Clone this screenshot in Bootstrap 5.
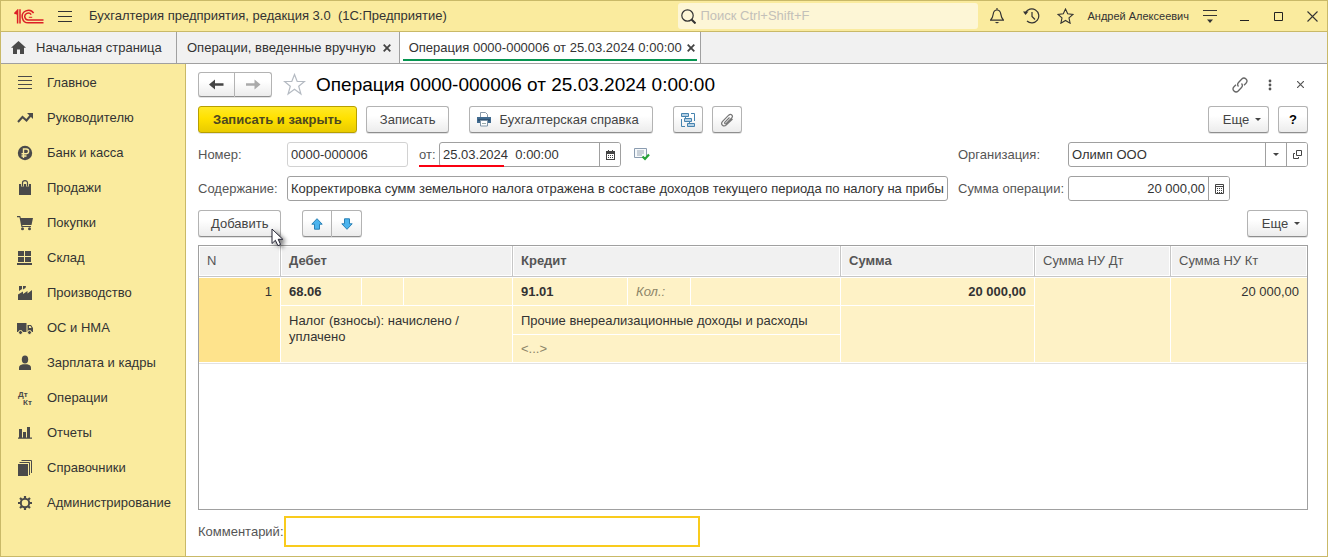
<!DOCTYPE html>
<html lang="ru">
<head>
<meta charset="utf-8">
<meta name="viewport" content="width=device-width, initial-scale=1">
<title>Операция 0000-000006 от 25.03.2024 0:00:00</title>
<link href="https://cdn.jsdelivr.net/npm/bootstrap@5.3.0/dist/css/bootstrap.min.css" rel="stylesheet">
<style>
  :root { --gold: #faeb9e; --gold-line: #c9b968; --ink: #333; --line: #a0a0a0; }
  body { font-family: "Liberation Sans", Arial, sans-serif; font-size: 13px; line-height: 16px; color: var(--ink); }
  svg { display: block; flex: none; }
  a { color: inherit; text-decoration: none; }
  .window { border: 1px solid var(--gold-line); }
  .plain { border: 0; background: none; padding: 0; color: inherit; line-height: 16px; }

  .titlebar { height: 31px; background: var(--gold); border-bottom: 1px solid var(--gold-line); padding: 0 9px 0 13px; }
  .search { width: 300px; height: 26px; background: #fdf6d6; border-radius: 3px; padding-left: 3px; }
  .search input { border: 0; background: none; outline: 0; padding: 0; width: 240px; }
  .search input::placeholder { color: #c3c0b9; opacity: 1; }
  .user { font-size: 11px; }

  .tabs { height: 32px; background: #f1f1f1; border-bottom: 1px solid var(--line); }
  .tab-item { border-right: 1px solid var(--line); padding: 0 8px 0 10px; height: 31px; gap: 7px; }
  .tab-home { width: 176px; gap: 10px; }
  .tab-open { background: #fff; padding: 0 3px; }
  .tab-open > div { border-bottom: 2px solid #079551; padding: 4px 2px 0 6px; height: 29px; gap: 5px; }

  .sections { width: 185px; background: var(--gold); border-right: 1px solid var(--gold-line); padding-top: 1px; }
  .sections a { height: 35px; padding-left: 16px; gap: 14px; }
  .glyph { fill: #4a4a4a; }

  .form-area { padding: 8px 19px 9px 12px; min-width: 0; }
  .form-area h1 { font-size: 19px; line-height: 24px; color: #000; }
  .tool { height: 27px; border: 1px solid #b3b3b3; border-bottom-color: #8e8e8e; border-radius: 3px; background: linear-gradient(#fff 35%, #ececec); color: #444; padding: 0 13px; line-height: 16px; box-shadow: 0 1px 0 #e2e2e2; }
  .tool-main { background: linear-gradient(#ffe927, #ffe100 45%, #e9cb00); border-color: #b79f00; font-weight: bold; color: #4d4820; padding: 0 14px; }
  .tool-square { width: 30px; padding: 0; }
  .tool-more { width: 61px; gap: 6px; padding: 0 0 0 7px; }
  .tool-add { padding: 0 12px; }
  .pair > .tool + .tool { border-left: 0; border-radius: 0 3px 3px 0; }
  .pair > .tool:first-child { border-radius: 3px 0 0 3px; }
  .nav-pair .tool { height: 25px; width: 37px; padding: 0; }
  .caret { width: 0; border: 3px solid transparent; border-top-color: #444; border-bottom: 0; }

  .fields { display: grid; grid-template-columns: 89px minmax(0, 1fr) 110px 240px; row-gap: 9px; align-items: center; margin-top: 9px; }
  .fields label, .comment label { color: #555; }
  .boxed { display: flex; height: 25px; border: 1px solid var(--line); border-radius: 3px; background: #fff; overflow: hidden; }
  .boxed input { border: 0; outline: 0; background: none; min-width: 0; flex: 1; padding: 0 3px; color: var(--ink); }
  .boxed button { width: 21px; border: 0; border-left: 1px solid var(--line); background: #fff; padding: 0; display: flex; align-items: center; justify-content: center; }
  .dim { border-color: #d2d2d2; }
  .w-number { width: 121px; } .w-date { width: 182px; } .w-sum { width: 162px; }
  .date-line { left: 0; top: 23px; width: 85px; height: 2px; background: #fa0010; }
  .cursor { left: 73px; top: 18px; z-index: 2; }

  .grid-box { border: 1px solid var(--line); margin-top: 8px; }
  .entries { width: 100%; table-layout: fixed; border-collapse: separate; border-spacing: 0; }
  .entries th { height: 31px; padding: 0 8px; background: #f1f1f1; color: #555; font-weight: normal; border-right: 1px solid #c6c6c6; border-bottom: 1px solid #c6c6c6; box-shadow: inset 0 0 0 1px #fff; }
  .entries td { background: #fef2c6; padding: 6px 8px 4px; vertical-align: top; border-right: 1px solid #fff; border-bottom: 1px solid #fff; }
  .entries tr > .edge { border-right: 0; }
  .entries .first td { height: 29px; border-top: 1px solid #fff; }
  .entries .second td { height: 29px; padding-top: 7px; }
  .entries .third td { height: 28px; padding-top: 6px; }
  .entries .picked { background: #fee38c; }
  .grid-end { height: 1px; background: #e2e2e2; }
  .hint { color: #8c8568; }
  .comment { margin-top: 6px; }
  .comment label { width: 86px; }
  .comment input { width: 416px; height: 31px; border: 2px solid #f9cb1d; outline: 0; padding: 0 4px; }
</style>
</head>
<body>
<div class="window d-flex flex-column min-vh-100">

  <header class="titlebar d-flex align-items-center">
    <svg width="30" height="15" viewBox="0 0 30 15" fill="none" stroke="#dc1f26" stroke-width="1.5"><path d="M.4 4.7 3.6 1.3V14.5M6 .3V14.5M1.7 5.2 3.6 3.6"/><path d="M19.6 4.2A6.2 6.2 0 1 0 14.8 13.8H29.5M17.2 5.6A3.5 3.5 0 1 0 14.8 11H29.5"/><path d="M14.8 8.3h3.4" stroke-width="1"/></svg>
    <button class="plain" aria-label="Меню" style="margin:0 17px 0 14px"><svg width="14" height="13" stroke="#333"><path d="M0 1.5h14M0 6.5h14M0 11.5h14"/></svg></button>
    <span>Бухгалтерия предприятия, редакция 3.0&nbsp; (1С:Предприятие)</span>
    <label class="search d-flex align-items-center ms-auto gap-1">
      <svg width="15" height="15" fill="none" stroke="#333" stroke-width="1.2"><circle cx="6.5" cy="6.5" r="5.7"/><path d="m10.5 10.5 4 4" stroke-width="2"/></svg>
      <input type="text" placeholder="Поиск Ctrl+Shift+F" aria-label="Поиск">
    </label>
    <button class="plain" aria-label="Уведомления" style="margin-left:12px"><svg width="14" height="16" fill="none" stroke="#333" stroke-width="1.2"><path d="M7 0v2M.5 12.2h13c-2-2-2.3-3-2.7-6C10.500 3.500 9 2 7 2S3.500 3.500 3.200 6.200c-.4 3-.7 4-2.700 6Z"/><path d="M4.700 14h4.600L7 15.500Z" fill="#333" stroke="none"/></svg></button>
    <button class="plain" aria-label="История" style="margin-left:19px"><svg width="17" height="16" fill="none" stroke="#333" stroke-width="1.2"><path d="M2.500 4.800A7 7 0 1 1 4 13"/><path d="M9 4v4.500l3 3"/><path d="M0 3.500h5.500L2.500 7Z" fill="#333" stroke="none"/></svg></button>
    <button class="plain" aria-label="Избранное" style="margin-left:17px"><svg width="17" height="16" fill="none" stroke="#333" stroke-width="1.1"><path d="m8.500 1 2.200 4.800 5.200.6-3.900 3.500 1.100 5.300-4.600-2.700-4.600 2.700L5 9.900 1.100 6.400l5.200-.6Z"/></svg></button>
    <a href="#" class="user" style="margin-left:13px">Андрей Алексеевич</a>
    <button class="plain" aria-label="Настройки" style="margin-left:14px"><svg width="14" height="14" stroke="#333"><path d="M0 1.500h14M0 6.500h14"/><path d="M4 10.500h6L7 14Z" fill="#333" stroke="none"/></svg></button>
    <button class="plain" aria-label="Свернуть" style="margin-left:23px"><svg width="9" height="12" stroke="#222"><path d="M0 10.500h9"/></svg></button>
    <button class="plain" aria-label="Развернуть" style="margin-left:25px"><svg width="9" height="9" fill="none" stroke="#222"><path d="M.5.5h8v8h-8Z"/></svg></button>
    <button class="plain" aria-label="Закрыть" style="margin-left:24px"><svg width="11" height="11" stroke="#333" stroke-width="1.100"><path d="m.5.5 10 10m0-10-10 10"/></svg></button>
  </header>

  <nav class="tabs d-flex">
    <a href="#" class="tab-item tab-home d-flex align-items-center"><svg class="glyph" width="15" height="13"><path d="M7.500 0 0 6.800h2V13h4V8.500h3V13h4V6.800h2Z"/></svg>Начальная страница</a>
    <div class="tab-item d-flex align-items-center"><a href="#">Операции, введенные вручную</a><button class="plain" aria-label="Закрыть вкладку"><svg width="8" height="8" stroke="#444" stroke-width="1.800"><path d="m.7.7 6.600 6.600m0-6.600L.7 7.300"/></svg></button></div>
    <div class="tab-item tab-open"><div class="d-flex align-items-center"><a href="#">Операция 0000-000006 от 25.03.2024 0:00:00</a><button class="plain" aria-label="Закрыть вкладку"><svg width="8" height="8" stroke="#444" stroke-width="1.800"><path d="m.7.7 6.600 6.600m0-6.600L.7 7.300"/></svg></button></div></div>
  </nav>

  <div class="d-flex flex-grow-1">
    <nav class="sections flex-shrink-0">
      <a href="#" class="d-flex align-items-center"><svg width="16" height="16" stroke="#4a4a4a"><path d="M1 1.500h14M1 5.500h14M1 9.500h14M1 13.500h14"/></svg>Главное</a>
      <a href="#" class="d-flex align-items-center"><svg width="16" height="16" fill="none" stroke="#4a4a4a" stroke-width="2"><path d="m1 12 4.500-5 4 3.500L14 5"/><path d="M10 3h6v6Z" fill="#4a4a4a" stroke="none"/></svg>Руководителю</a>
      <a href="#" class="d-flex align-items-center"><svg width="16" height="16"><circle cx="8" cy="8" r="7.200" fill="#4a4a4a"/><path d="M6.500 13V4h2.800a2.300 2.300 0 0 1 0 4.700H4.500m0 2.300h5" fill="none" stroke="#faeb9e" stroke-width="1.400"/></svg>Банк и касса</a>
      <a href="#" class="d-flex align-items-center"><svg class="glyph" width="16" height="16"><path d="M2 4h12v11H2Z"/><path d="M5.500 6.500V2.800a2.500 2.200 0 0 1 5 0v3.700" fill="none" stroke="#faeb9e" stroke-width="2.800"/><path d="M5.500 6.500V2.800a2.500 2.200 0 0 1 5 0v3.700" fill="none" stroke="#4a4a4a" stroke-width="1.200"/></svg>Продажи</a>
      <a href="#" class="d-flex align-items-center"><svg class="glyph" width="16" height="16"><path d="M0 1h3.200l.6 2H16l-1.500 7H5.200l.3 1H14v1H4.400L2.500 2.200H0Z"/><circle cx="5.500" cy="13.700" r="1.500"/><circle cx="12.500" cy="13.700" r="1.500"/></svg>Покупки</a>
      <a href="#" class="d-flex align-items-center"><svg class="glyph" width="16" height="16"><path d="M1 1h6v5H1Zm7 0h6v5H8ZM1 7h6v5H1Zm7 0h6v5H8ZM0 13h15v2H0Z"/></svg>Склад</a>
      <a href="#" class="d-flex align-items-center"><svg class="glyph" width="16" height="16"><path d="M1 15V9.500L6 6.500V9l4.500-3v2.500L15 5v10ZM2 1h3v3L2 6Zm4 0h3l-.5 2-2.500 1.500Z"/></svg>Производство</a>
      <a href="#" class="d-flex align-items-center"><svg class="glyph" width="16" height="16"><path d="M0 3h9.500v9H0Zm10.500 2H14l2 3v4h-5.500Z"/><path d="M12 6h1.500l1 2H12Z" fill="#faeb9e"/><g stroke="#faeb9e"><circle cx="3.500" cy="12.500" r="2"/><circle cx="12.500" cy="12.500" r="2"/></g></svg>ОС и НМА</a>
      <a href="#" class="d-flex align-items-center"><svg class="glyph" width="16" height="16"><ellipse cx="8" cy="4.500" rx="3.200" ry="3.900"/><path d="M2 15v-2.500C2 10.500 4 9.700 5.800 9.200h4.400C12 9.700 14 10.500 14 12.500V15Z"/></svg>Зарплата и кадры</a>
      <a href="#" class="d-flex align-items-center"><svg class="glyph" width="16" height="16" font-size="8" font-weight="bold"><text x="1" y="7">Дт</text><text x="6" y="15">Кт</text></svg>Операции</a>
      <a href="#" class="d-flex align-items-center"><svg class="glyph" width="16" height="16"><path d="M2 4h3v9H2Zm4 3h3v6H6Zm4-5h3v11h-3ZM1 12.500h14v1.200H1Z"/></svg>Отчеты</a>
      <a href="#" class="d-flex align-items-center"><svg class="glyph" width="16" height="16"><path d="M1 4h10v12H1Z"/><path d="M2.500 2.500h10V15M4.500.5h10V13" fill="none" stroke="#4a4a4a"/></svg>Справочники</a>
      <a href="#" class="d-flex align-items-center"><svg width="16" height="16" fill="none" stroke="#4a4a4a"><circle cx="8" cy="8" r="4.200" stroke-width="2"/><path d="M8 1v2.500m0 9V15M1 8h2.500m9 0H15M3 3l1.800 1.800m6.400 6.400L13 13M13 3l-1.800 1.800m-6.400 6.400L3 13" stroke-width="2.200"/></svg>Администрирование</a>
    </nav>

    <main class="form-area d-flex flex-column flex-grow-1">
      <div class="d-flex align-items-center">
        <div class="pair nav-pair d-flex">
          <button class="tool d-flex align-items-center justify-content-center" aria-label="Назад"><svg width="15" height="11" fill="#444"><path d="M0 5.500 6 .5v3.700h8.500v2.600H6v3.700Z"/></svg></button>
          <button class="tool d-flex align-items-center justify-content-center" aria-label="Вперед"><svg width="15" height="11" fill="#aaa"><path d="m14.500 5.500-6-5v3.700H0v2.600h8.500v3.700Z"/></svg></button>
        </div>
        <button class="plain" aria-label="В избранное" style="margin-left:11px"><svg width="23" height="23" fill="none" stroke="#b4bac2" stroke-width="1.200"><path d="m11.500 1.500 2.700 7h7.300l-5.800 4.700 2.200 7.800-6.400-4.700L5.100 21l2.200-7.800L1.500 8.500h7.300Z"/></svg></button>
        <h1 class="mb-0" style="margin-left:10px">Операция 0000-000006 от 25.03.2024 0:00:00</h1>
        <button class="plain ms-auto" aria-label="Ссылка"><svg width="16" height="16" fill="none" stroke="#666" stroke-width="1.300"><path d="M6.500 9.500a3 3 0 0 1 0-4L9.800 2a3 3 0 0 1 4.200 0 3 3 0 0 1 0 4.200L12 8.300M9.500 6.500a3 3 0 0 1 0 4L6.200 14A3 3 0 0 1 2 14a3 3 0 0 1 0-4.200L4 7.700"/></svg></button>
        <button class="plain" aria-label="Еще действия" style="margin-left:20px"><svg width="4" height="12" fill="#555"><circle cx="2" cy="2" r="1.400"/><circle cx="2" cy="6" r="1.400"/><circle cx="2" cy="10" r="1.400"/></svg></button>
        <button class="plain" aria-label="Закрыть" style="margin:0 4px 0 25px"><svg width="7" height="7" stroke="#555" stroke-width="1.200"><path d="m0 0 7 7m0-7L0 7"/></svg></button>
      </div>

      <div class="d-flex" style="margin-top:9px">
        <button class="tool tool-main">Записать и закрыть</button>
        <button class="tool" style="margin-left:9px">Записать</button>
        <button class="tool d-flex align-items-center gap-2" style="margin-left:20px;padding-left:7px"><svg width="14" height="15" viewBox="0 0 14 15"><path d="M3.500 5V.5h5l2 2V5" fill="#fff" stroke="#8a99a8"/><path d="M0 5h14v6H0Z" fill="#416b90"/><path d="M1 8h12" stroke="#203f5b"/><path d="M3.500 8.500h7v5.500h-7Z" fill="#fff" stroke="#7f95a8"/><path d="M5 11.500h4" stroke="#9aa"/></svg>Бухгалтерская справка</button>
        <button class="tool tool-square d-flex align-items-center justify-content-center" aria-label="Структура подчиненности" style="margin-left:20px"><svg width="16" height="14" fill="#b5d0e4" stroke="#4683af"><path d="M1.500.500h7v3h-7ZM4.500 5.500h7v3h-7ZM7.500 10.500h7v3h-7Z"/><path d="M11 .5h3.500V8M1.500 6v7.500H5M5.500 3.500v2M9.500 8.500v2" fill="none"/></svg></button>
        <button class="tool tool-square d-flex align-items-center justify-content-center" aria-label="Файлы" style="margin-left:9px"><svg width="14" height="14" fill="none" stroke="#777" stroke-width="1.200"><path d="M9.500 4.500 5 9.200c-.9 1 .3 2.200 1.300 1.300L11.700 5c2-2.300-.8-4.900-3-2.800L2.600 8.300c-2.600 2.900 1 6.300 3.800 3.600L12.500 6"/></svg></button>
        <button class="tool tool-more d-flex align-items-center justify-content-center ms-auto">Еще<span class="caret"></span></button>
        <button class="tool tool-square fw-bold text-black" style="margin-left:9px">?</button>
      </div>

      <div class="fields">
        <label for="num">Номер:</label>
        <div class="d-flex align-items-center">
          <div class="boxed dim w-number"><input id="num" value="0000-000006" readonly></div>
          <div class="d-flex align-items-center position-relative" style="margin-left:11px">
            <label for="date" style="width:20px">от:</label>
            <div class="boxed w-date"><input id="date" value="25.03.2024&nbsp; 0:00:00"><button aria-label="Календарь"><svg width="9" height="10" fill="#444"><path d="M0 1h9v9H0Z"/><path d="M1 4h7v5H1Z" fill="#fff"/><path d="M2 0h1v2H2Zm4 0h1v2H6ZM2 5h1v1H2Zm2 0h1v1H4Zm2 0h1v1H6ZM2 7h1v1H2Zm2 0h1v1H4Zm2 0h1v1H6Z"/></svg></button></div>
            <span class="date-line position-absolute"></span>
          </div>
          <svg width="16" height="13" style="margin-left:13px"><path d="M.5.500h12v9H.5Z" fill="#f6f9fb" stroke="#8b9cb0"/><path d="M3 3h7M3 5h7M3 7h5" stroke="#9aa7b5"/><path d="m8.500 8.500 2.500 2.500 4-4.500" fill="none" stroke="#25a336" stroke-width="2.200"/></svg>
        </div>
        <label for="org">Организация:</label>
        <div class="boxed"><input id="org" value="Олимп ООО"><button aria-label="Выбрать"><span class="caret"></span></button><button aria-label="Открыть"><svg width="9" height="9" fill="none" stroke="#444"><path d="M3.500.500h5v5h-5ZM2 3.500H.5v5h5V7"/></svg></button></div>
        <label for="descr">Содержание:</label>
        <div class="boxed" style="margin-right:10px"><input id="descr" value="Корректировка сумм земельного налога отражена в составе доходов текущего периода по налогу на прибы"></div>
        <label for="total">Сумма операции:</label>
        <div class="boxed w-sum"><input id="total" class="text-end" value="20 000,00"><button aria-label="Калькулятор"><svg width="9" height="10" fill="none" stroke="#444"><path d="M.5.500h8v9h-8ZM0 2.500h9"/><path d="M2 4.500h6M2 6.500h6M2 8.500h6" stroke-dasharray="1 1"/></svg></button></div>
      </div>

      <div class="d-flex position-relative" style="margin-top:9px">
        <button class="tool tool-add">Добавить</button>
        <div class="pair d-flex" style="margin-left:21px">
          <button class="tool tool-square d-flex align-items-center justify-content-center" aria-label="Вверх"><svg width="12" height="12" fill="#4bb4ee" stroke="#2a80b5"><path d="m6 .7 5.200 5.500H8.500v5h-5v-5H.8Z"/></svg></button>
          <button class="tool tool-square d-flex align-items-center justify-content-center" aria-label="Вниз"><svg width="12" height="12" fill="#4bb4ee" stroke="#2a80b5"><path d="M6 11.300.8 5.800h2.700v-5h5v5h2.700Z"/></svg></button>
        </div>
        <button class="tool tool-more d-flex align-items-center justify-content-center ms-auto">Еще<span class="caret"></span></button>
        <svg class="cursor position-absolute" width="18" height="24" viewBox="0 0 18 24" style="filter:drop-shadow(3px 2px 2px #0008)"><path d="M1 1v14.500l3.400-3.200 2.500 5.400 2.700-1.200-2.400-5.200h4.600Z" fill="#fff" stroke="#223"/></svg>
      </div>

      <div class="grid-box flex-grow-1">
        <table class="entries">
          <colgroup><col style="width:82px"><col style="width:81px"><col style="width:42px"><col style="width:109px"><col style="width:115px"><col style="width:63px"><col style="width:150px"><col style="width:194px"><col style="width:136px"><col style="width:136px"></colgroup>
          <thead><tr><th>N</th><th colspan="3" class="fw-bold">Дебет</th><th colspan="3" class="fw-bold">Кредит</th><th class="fw-bold">Сумма</th><th>Сумма НУ Дт</th><th class="edge">Сумма НУ Кт</th></tr></thead>
          <tbody>
            <tr class="first"><td rowspan="3" class="picked text-end">1</td><td class="fw-bold">68.06</td><td></td><td></td><td class="fw-bold">91.01</td><td class="fst-italic hint">Кол.:</td><td></td><td class="fw-bold text-end">20 000,00</td><td rowspan="3"></td><td rowspan="3" class="edge text-end">20 000,00</td></tr>
            <tr class="second"><td colspan="3" rowspan="2">Налог (взносы): начислено / уплачено</td><td colspan="3">Прочие внереализационные доходы и расходы</td><td rowspan="2"></td></tr>
            <tr class="third"><td colspan="3" class="hint">&lt;...&gt;</td></tr>
          </tbody>
        </table>
        <div class="grid-end"></div>
      </div>

      <div class="comment d-flex align-items-center"><label for="note">Комментарий:</label><input id="note" type="text"></div>
    </main>
  </div>
</div>
<script src="https://cdn.jsdelivr.net/npm/bootstrap@5.3.0/dist/js/bootstrap.bundle.min.js"></script>
</body>
</html>
